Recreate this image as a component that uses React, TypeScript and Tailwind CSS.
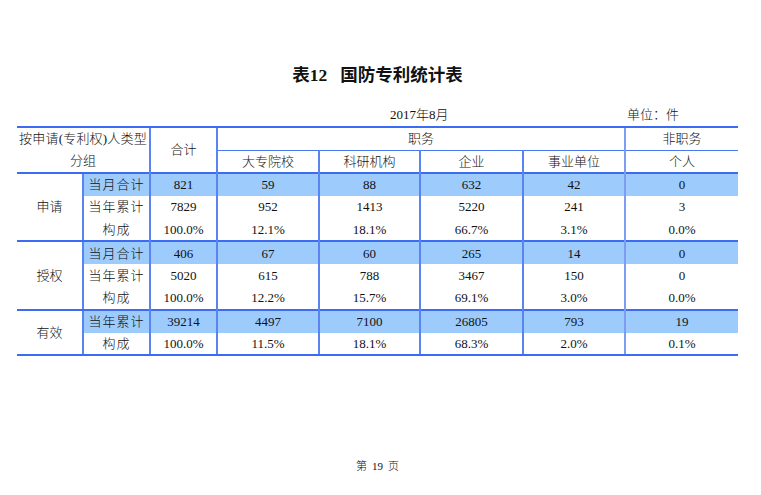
import { FC } from "react";

type Row = { label: string; values: string[]; hl?: boolean };
type Group = { name: string; rows: Row[] };

const groups: Group[] = [
  {
    name: "申请",
    rows: [
      { label: "当月合计", values: ["821", "59", "88", "632", "42", "0"], hl: true },
      { label: "当年累计", values: ["7829", "952", "1413", "5220", "241", "3"] },
      { label: "构成", values: ["100.0%", "12.1%", "18.1%", "66.7%", "3.1%", "0.0%"] },
    ],
  },
  {
    name: "授权",
    rows: [
      { label: "当月合计", values: ["406", "67", "60", "265", "14", "0"], hl: true },
      { label: "当年累计", values: ["5020", "615", "788", "3467", "150", "0"] },
      { label: "构成", values: ["100.0%", "12.2%", "15.7%", "69.1%", "3.0%", "0.0%"] },
    ],
  },
  {
    name: "有效",
    rows: [
      { label: "当年累计", values: ["39214", "4497", "7100", "26805", "793", "19"], hl: true },
      { label: "构成", values: ["100.0%", "11.5%", "18.1%", "68.3%", "2.0%", "0.1%"] },
    ],
  },
];

const font = "font-['Liberation_Serif','Noto_Sans_CJK_SC',serif]";

const App: FC = () => {
  return (
    <div className={`w-[761px] h-[495px] bg-white text-[#111] flex flex-col ${font}`}>
      <h1 className="pt-[62px] text-center text-[17.5px] leading-[26px] font-bold pr-[6px]">
        表12&nbsp;&nbsp;&nbsp;国防专利统计表
      </h1>

      <div className="mt-[17px] flex pl-[390px] text-[13px] leading-[20px] font-light">
        <span className="w-[237px]">2017年8月</span>
        <span>单位：件</span>
      </div>

      <table className="ml-[17px] mt-[1px] w-[721px] table-fixed border-collapse text-[13px] text-center font-light whitespace-nowrap">
        <colgroup>
          <col className="w-[66px]" />
          <col className="w-[67px]" />
          <col className="w-[67px]" />
          <col className="w-[102px]" />
          <col className="w-[101px]" />
          <col className="w-[103px]" />
          <col className="w-[102px]" />
          <col className="w-[113px]" />
        </colgroup>
        <tbody>
          <tr className="h-[23px]">
            <td colSpan={2} rowSpan={2} className="border-t-2 border-[#3b6cf3] p-0 leading-[22px]">
              <div className="tracking-[0.2px]">按申请(专利权)人类型</div>
              <div>分组</div>
            </td>
            <td rowSpan={2} className="border-t-2 border-l-2 border-t-[#3b6cf3] border-l-[#5a84f2] p-0">
              合计
            </td>
            <td colSpan={4} className="border-t-2 border-l-2 border-t-[#3b6cf3] border-l-[#5a84f2] p-0">
              职务
            </td>
            <td className="border-t-2 border-l-2 border-t-[#3b6cf3] border-l-[#7d9cf4] p-0">非职务</td>
          </tr>
          <tr className="h-[23px]">
            {["大专院校", "科研机构", "企业", "事业单位"].map((t) => (
              <td key={t} className="border-t-[1.5px] border-l-2 border-t-[#4a78f2] border-l-[#5a84f2] p-0">
                {t}
              </td>
            ))}
            <td className="border-t-[1.5px] border-l-2 border-t-[#4a78f2] border-l-[#7d9cf4] p-0">个人</td>
          </tr>

          {groups.map((g, gi) =>
            g.rows.map((r, ri) => {
              const top = ri === 0 ? "border-t-2 border-t-[#3b6cf3]" : "";
              const bottom =
                gi === groups.length - 1 && ri === g.rows.length - 1 ? "border-b-2 border-b-[#3b6cf3]" : "";
              const bg = r.hl ? "bg-[#9ccbfc]" : "";
              return (
                <tr key={g.name + r.label} className="h-[22.8px]">
                  {ri === 0 && (
                    <td rowSpan={g.rows.length} className="border-t-2 border-b-2 border-[#3b6cf3] p-0">
                      {g.name}
                    </td>
                  )}
                  <td className={`border-l-2 border-l-[#5a84f2] p-0 tracking-[1px] ${top} ${bottom} ${bg}`}>
                    {r.label}
                  </td>
                  {r.values.map((v, vi) => (
                    <td
                      key={vi}
                      className={`border-l-2 p-0 ${
                        vi === 5 ? "border-l-[#7d9cf4]" : "border-l-[#5a84f2]"
                      } ${top} ${bottom} ${bg}`}
                    >
                      {v}
                    </td>
                  ))}
                </tr>
              );
            })
          )}
        </tbody>
      </table>

      <div className="mt-auto pb-[22px] flex justify-center gap-[5px] text-[11px] leading-[14px] pr-[6px] font-light">
        <span>第</span>
        <span>19</span>
        <span>页</span>
      </div>
    </div>
  );
};

export default App;
